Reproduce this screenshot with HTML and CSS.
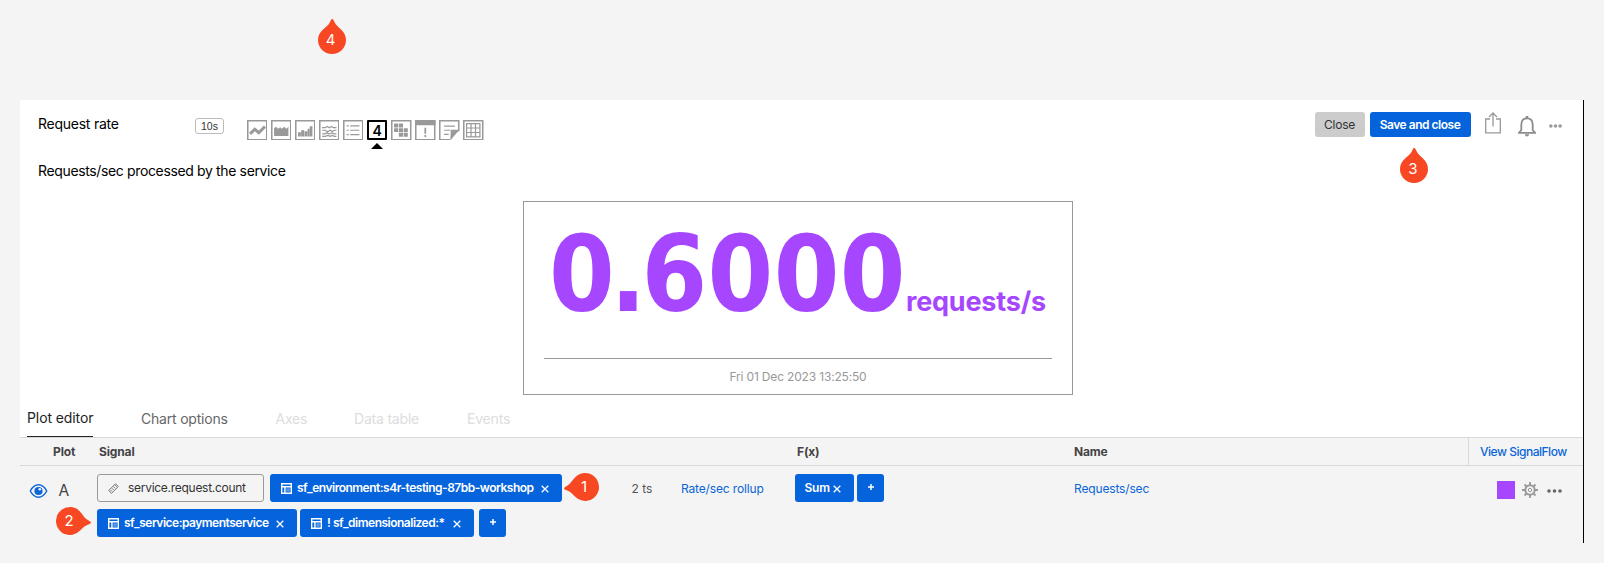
FILE: index.html
```html
<!DOCTYPE html>
<html lang="en">
<head>
<meta charset="utf-8">
<title>Request rate</title>
<link rel="stylesheet" href="styles.css">
</head>
<body>
<svg class="defs" width="0" height="0">
  <symbol id="pin" viewBox="0 0 28 35"><path d="M14 0C15.600 0 16 2.500 18 5.500C20.500 9 28 12.500 28 21A14 14 0 0 1 0 21C0 12.500 7.500 9 10.500 5.500C12.600 2.500 13 0 14 0Z" fill="#f74823"/></symbol>
  <symbol id="dim" viewBox="0 0 11 11"><path d="M.7.7H10.300V10.300H.7ZM.7 3.700H10.300M3.900 3.700V10.300" fill="none" stroke="#fff" stroke-width="1.400"/><path d="M5.300 5.200H8.800V8.800H5.300Z" fill="#fff" opacity=".35"/></symbol>
  <symbol id="x" viewBox="0 0 8 8"><path d="M.7.700L7.300 7.300M7.300.7L.7 7.300" stroke="#fff" stroke-width="1.300" fill="none"/></symbol>
  <symbol id="plus" viewBox="0 0 6 6"><path d="M3 0V6M0 3H6" stroke="#fff" stroke-width="1.500" fill="none"/></symbol>
</svg>

<main class="panel">
  <section class="chart">
    <header class="bar">
      <h1 class="title">Request rate</h1>
      <span class="res">10s</span>
      <nav class="types">
        <svg class="type" viewBox="0 0 20 20"><path class="frame" d="M.75.75H19.250V19.250H.75Z"/><path d="M3 13.500L7.600 9L11.500 12.400L17.500 6.300" stroke-width="2.900" fill="none" stroke="#999"/></svg>
        <svg class="type" viewBox="0 0 20 20"><path class="frame" d="M.75.75H19.250V19.250H.75Z"/><path class="fill" d="M3 15.500V8L5 6.500L7 8.500L9 7L10.500 8.500L13 6.500L15 8.500L17 6.500V15.500Z"/></svg>
        <svg class="type" viewBox="0 0 20 20"><path class="frame" d="M.75.75H19.250V19.250H.75Z"/><path class="fill" d="M3 12H5.700V16H3ZM6 10H8.800V16H6ZM9.200 11H12V16H9.200ZM12.300 8.500H14.200V16H12.300ZM14.400 6H17V16H14.400Z"/></svg>
        <svg class="type" viewBox="0 0 20 20"><path class="frame" d="M.75.75H19.250V19.250H.75Z"/><path class="thin" d="M3 7.500H6L8 6.300L10 7.500L12 6.300L14 7.500H17M3 10H6L8.500 11.500L11 10L13 11.200L15 10H17M3 13.500H5.500L8 12.500L10 13.800L12.500 12.500L15 13.500H17M3 16H6L8.500 15L11 16L13 15L15 16H17"/></svg>
        <svg class="type" viewBox="0 0 20 20"><path class="frame" d="M.75.75H19.250V19.250H.75Z"/><path class="thin" d="M3.500 5.700H5.500M7 5.700H16M3.500 10H5.500M7 10H16M3.500 14.300H5.500M7 14.300H16"/></svg>
        <span class="type single">4</span>
        <svg class="type" viewBox="0 0 20 20"><path class="frame" d="M.75.75H19.250V19.250H.75Z"/><path class="fill" d="M3 3.500H7V7.300H3ZM7.700 3.500H11.700V7.300H7.700ZM3 8H7V11.800H3ZM7.700 8H11.700V11.800H7.700ZM12.400 8H16.400V11.800H12.400ZM7.700 12.500H11.700V16.300H7.700ZM12.400 12.500H16.400V16.300H12.400Z"/></svg>
        <svg class="type" viewBox="0 0 20 20"><path class="frame" d="M.75.75H19.250V19.250H.75Z"/><path class="fill" d="M0 0H20V5H0ZM9.200 7.500H10.900V13.500H9.200ZM9.200 14.700H10.900V16.500H9.200Z"/></svg>
        <svg class="type" viewBox="0 0 20 20"><path class="frame" d="M11 19.250H.75V.75H19.250V11"/><path class="thin" d="M5 6H15.500M5 10H11M5 14H9.500"/><path class="fill" d="M11.500 9.500H20L11 20Z"/></svg>
        <svg class="type" viewBox="0 0 20 20"><path class="frame" d="M.75.75H19.250V19.250H.75Z"/><path class="thin" d="M3.500 3.500H16.500V16.500H3.500ZM3.500 7.800H16.500M3.500 12.200H16.500M7.800 3.500V16.500M12.200 3.500V16.500"/></svg>
      </nav>
      <div class="actions">
        <button class="btn close">Close</button>
        <button class="btn save">Save and close</button>
        <svg class="share" viewBox="0 0 16 22"><path d="M5 7H.7V20.800H15.300V7H11M8 14.500V1M4 5L8 1L12 5" fill="none" stroke="#999" stroke-width="1.300"/></svg>
        <svg class="bell" viewBox="0 0 18 21"><path d="M1 16.800L3.300 14V8.500C3.300 4.600 5.400 2.300 9 2.300S14.700 4.600 14.700 8.500V14L17 16.800Z" fill="none" stroke="#8c8c8c" stroke-width="1.800"/><path d="M7.700 0H10.300V2.500H7.700ZM6.800 18.200H11.200Q10.800 20.500 9 20.500T6.800 18.200Z" fill="#8c8c8c"/></svg>
        <svg class="more" viewBox="0 0 13 4"><g fill="#999"><circle cx="1.900" cy="2" r="1.800"/><circle cx="6.500" cy="2" r="1.800"/><circle cx="11.100" cy="2" r="1.800"/></g></svg>
      </div>
    </header>
    <p class="desc">Requests/sec processed by the service</p>
    <div class="value-card">
      <div class="value"><span class="num"><span class="lead">0.</span>6000</span><span class="unit">requests/s</span></div>
      <div class="stamp">Fri 01 Dec 2023 13:25:50</div>
    </div>
    <nav class="tabs">
      <span class="tab active">Plot editor</span>
      <span class="tab options">Chart options</span>
      <span class="tab off axes">Axes</span>
      <span class="tab off data">Data table</span>
      <span class="tab off events">Events</span>
    </nav>
  </section>

  <section class="plots">
    <div class="row head">
      <span class="h-plot">Plot</span><span class="h-signal">Signal</span><span></span><span></span><span class="h-fx">F(x)</span><span class="h-name">Name</span><a class="flow">View SignalFlow</a>
    </div>
    <div class="row body">
      <div class="plot">
        <svg class="eye" viewBox="0 0 18 14"><path d="M.8 7Q4 .8 9 .8T17.200 7Q14 13.200 9 13.200T.8 7Z" fill="none" stroke="#0a66d8" stroke-width="1.400"/><circle cx="9" cy="7" r="4.100" fill="#0a66d8"/><circle cx="10.300" cy="5.300" r="1.300" fill="#f4f4f4"/></svg>
        <span class="letter">A</span>
      </div>
      <div class="signal">
        <div class="chips">
          <span class="chip metric"><svg width="11" height="11" viewBox="0 0 11 11"><path d="M.7 7.500L7.500.7L10.300 3.500L3.500 10.300ZM2.300 6.800L4 8.500M3.900 5.200L5.600 6.900M5.500 3.600L7.200 5.300M7.100 2L8.800 3.700" fill="none" stroke="#666" stroke-width=".9"/></svg><span class="t">service.request.count</span></span>
          <span class="chip env"><svg class="d"><use href="#dim"/></svg><span class="t">sf_environment:s4r-testing-87bb-workshop</span><svg class="x"><use href="#x"/></svg></span>
        </div>
        <div class="chips second">
          <span class="chip service"><svg class="d"><use href="#dim"/></svg><span class="t">sf_service:paymentservice</span><svg class="x"><use href="#x"/></svg></span>
          <span class="chip dimension"><svg class="d"><use href="#dim"/></svg><span class="t">! sf_dimensionalized:*</span><svg class="x"><use href="#x"/></svg></span>
          <span class="chip add"><svg class="p"><use href="#plus"/></svg></span>
        </div>
      </div>
      <span class="ts">2 ts</span>
      <a class="rollup">Rate/sec rollup</a>
      <div class="fx"><span class="chip sum"><span class="t">Sum</span><svg class="x"><use href="#x"/></svg></span><span class="chip add"><svg class="p"><use href="#plus"/></svg></span></div>
      <a class="name">Requests/sec</a>
      <div class="tools">
        <span class="swatch"></span>
        <svg class="gear" viewBox="0 0 16 16"><circle cx="8" cy="8" r="4.700" fill="none" stroke="#999" stroke-width="2"/><circle cx="8" cy="8" r="1.700" fill="none" stroke="#999"/><path d="M8 0V3.500M8 12.500V16M0 8H3.500M12.500 8H16M2.500 2.500L5 5M11 11L13.500 13.500M13.500 2.500L11 5M5 11L2.500 13.500" stroke="#999" stroke-width="1.800"/></svg>
        <svg class="dots" viewBox="0 0 15 4"><g fill="#666"><circle cx="2" cy="2" r="1.800"/><circle cx="7.500" cy="2" r="1.800"/><circle cx="13" cy="2" r="1.800"/></g></svg>
      </div>
    </div>
  </section>
</main>

<div class="pin p1"><svg><use href="#pin"/></svg><b>1</b></div>
<div class="pin p2"><svg><use href="#pin"/></svg><b>2</b></div>
<div class="pin p3"><svg><use href="#pin"/></svg><b>3</b></div>
<div class="pin p4"><svg><use href="#pin"/></svg><b>4</b></div>
</body>
</html>
```
FILE: styles.css
```css
* { box-sizing: border-box; }
html { height: 563px; overflow: hidden; }
body {
  margin: 0;
  padding-top: 100px;
  height: 563px;
  overflow: hidden;
  position: relative;
  background: #f4f4f4;
  color: #000;
  font: 12px/16px Inter, sans-serif;
}
svg { display: block; flex: none; }
span, a { white-space: nowrap; }
.defs { position: absolute; }
.panel { margin-left: 20px; width: 1564px; height: 443px; border-right: 1px solid #000; }

/* Chart area */
.chart { height: 338px; background: #fff; border-bottom: 1px solid #d9d9d9; display: flex; flex-direction: column; }
.bar { display: flex; height: 60px; padding-left: 18px; flex: none; }
.title { margin: 15px 0 0; width: 157px; font-size: 14px; line-height: 18px; font-weight: 400; letter-spacing: -.25px; }
.res { width: 29px; height: 16px; margin-top: 18px; border: 1px solid #bbb; border-radius: 3px; font: 10.500px/15px "Liberation Sans", sans-serif; text-align: center; color: #333; }
.types { display: flex; gap: 3.600px; margin: 19.600px 0 0 22.500px; }
.type { width: 20.500px; height: 20.500px; flex: none; }
.frame { fill: none; stroke: #999; stroke-width: 1.500; }
.fill { fill: #999; }
.thin { fill: none; stroke: #999; stroke-width: 1.200; }
.single { position: relative; border: 2px solid #000; border-radius: 1px; font-size: 14px; line-height: 17px; font-weight: 600; text-align: center; }
.single::after { content: ""; position: absolute; left: 2.500px; top: 21px; border: 6px solid transparent; border-top: 0; border-bottom-color: #000; }
.actions { display: flex; margin: 12px 21px 0 auto; }
.btn { height: 25px; padding: 0; border: 0; border-radius: 3px; font: 500 12px/25px Inter, sans-serif; }
.close { width: 50px; background: #ccc; color: #333; font-weight: 400; letter-spacing: -.2px; }
.save { width: 101px; margin-left: 5px; background: #0564dc; color: #fff; font-weight: 600; letter-spacing: -.48px; }
.share { width: 16px; height: 22px; margin-left: 14px; }
.bell { width: 18px; height: 21px; margin: 4px 0 0 17px; }
.more { width: 13px; height: 4px; margin: 12px 0 0 13.500px; }
.desc { margin: 2px 0 0 18px; font-size: 14px; line-height: 18px; letter-spacing: -.36px; }
.value-card { width: 550px; height: 194px; margin: 21px 0 0 503px; padding: 0 20px; border: 1px solid #999; flex: none; }
.value { height: 157px; padding: 28px 0 0 5px; border-bottom: 1px solid #999; display: flex; align-items: baseline; color: #a646ff; font-weight: 700; line-height: 90px; }
.num { width: 357px; font-family: "DejaVu Sans Condensed", "DejaVu Sans", sans-serif; font-stretch: condensed; font-size: 105px; letter-spacing: .4px; }
.lead { letter-spacing: -4.600px; }
.unit { font-size: 27px; letter-spacing: -.2px; }
.stamp { text-align: center; padding-top: 10px; color: #999; letter-spacing: -.17px; }
.tabs { display: flex; align-items: flex-start; height: 32px; margin: auto 0 0 7px; font-size: 14px; line-height: 18px; letter-spacing: -.2px; }
.tab { margin-top: 5px; color: #666; }
.active { width: 66px; height: 32px; margin-top: 0; padding-top: 4px; border-bottom: 1px solid #222; color: #222; letter-spacing: -.1px; }
.options { width: 87px; margin-left: 48px; }
.off { color: #ddd; }
.axes { width: 30px; margin-left: 47.500px; }
.data { width: 65px; margin-left: 48.500px; }
.events { margin-left: 48px; }

/* Plot table */
.row { display: grid; grid-template-columns: 77px 534.500px 49.500px 114px 279px 394px 1fr; }
.head { height: 28px; line-height: 28px; border-bottom: 1px solid #d9d9d9; font-weight: 700; color: #444; letter-spacing: -.15px; }
.h-plot { padding-left: 33px; }
.h-signal { padding-left: 2px; }
.h-fx { padding-left: 2px; }
.flow { border-left: 1px solid #d9d9d9; padding-left: 11px; font-weight: 500; letter-spacing: -.48px; }
a { color: #0a66d8; letter-spacing: -.15px; }
.body { padding-top: 8px; }
.plot { display: flex; padding: 10px 0 0 9px; }
.eye { width: 19px; height: 14px; }
.letter { margin-left: 10.500px; font-size: 15.500px; line-height: 14px; color: #444; }
.chips, .fx { display: flex; }
.second { margin-top: 7px; }
.chip { display: flex; align-items: center; height: 28px; padding-left: 11px; border-radius: 3px; background: #0564dc; color: #fff; font-weight: 600; }
.chip .t { letter-spacing: -.5px; }
.chip .d { width: 11px; height: 11px; margin-right: 5px; }
.chip .x { width: 8px; height: 8px; margin: 1px 13px 0 auto; }
.metric { width: 167px; background: #f4f4f4; border: 1px solid #999; color: #333; font-weight: 400; padding-left: 10px; }
.chip.metric .t { margin-left: 9px; letter-spacing: -.28px; }
.env { width: 292px; margin-left: 6px; }
.service { width: 200px; }
.dimension { width: 174px; margin-left: 3px; }
.add { width: 27px; margin-left: 5px; padding: 0 0 2px 10.500px; }
.p { width: 6px; height: 6px; }
.sum { width: 59px; padding-left: 9.500px; }
.sum .t { letter-spacing: -.2px; }
.fx .add { margin-left: 3px; }
.ts, .rollup, .name { padding-top: 7px; }
.ts { color: #555; }
.tools { display: flex; padding: 7px 0 0 29px; }
.swatch { width: 18px; height: 18px; background: #a646ff; }
.gear { width: 16px; height: 16px; margin: 1px 0 0 7px; }
.dots { width: 15px; height: 4px; margin: 8px 0 0 9px; }

/* Numbered callouts laid over the page */
.pin { position: absolute; width: 28px; height: 35px; }
.pin svg { width: 28px; height: 35px; transform-origin: 14px 21px; }
.pin b { position: absolute; left: -1px; top: 10.500px; width: 28px; font-weight: 400; font-size: 15px; line-height: 20px; text-align: center; color: #fff; }
.p1 { left: 571px; top: 466px; }
.p1 svg { transform: rotate(-95deg); }
.p2 { left: 56px; top: 500px; }
.p2 svg { transform: rotate(94deg); }
.p3 { left: 1400px; top: 148px; }
.p4 { left: 317.500px; top: 19px; }
```
